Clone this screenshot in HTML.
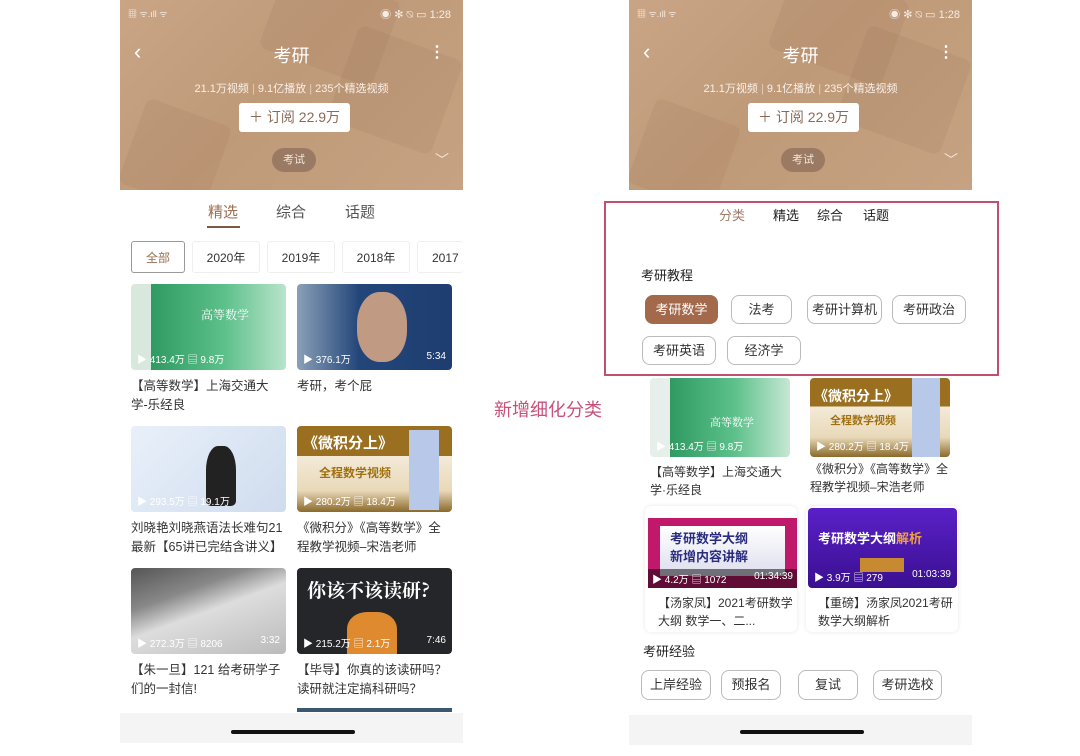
<!DOCTYPE html>
<html><head><meta charset="utf-8"><style>
*{margin:0;padding:0;box-sizing:border-box}
body{width:1080px;height:756px;background:#fff;position:relative;overflow:hidden;font-family:"Liberation Sans","Noto Sans CJK SC",sans-serif;color:#222}
.a{position:absolute}
.hdr{position:absolute;top:0;width:343px;height:190px;background:linear-gradient(135deg,#c9a586 0%,#bf9a78 45%,#c6a282 100%);overflow:hidden}
.sq{position:absolute;background:rgba(120,80,50,.08);transform:rotate(20deg);border-radius:8px}
.t{position:absolute;white-space:nowrap}
.sub{display:inline-block;background:#fff;border-radius:3px;color:#8a6a55;font-size:14px;padding:0 10px;height:29px;line-height:29px}
.tag{background:#9a7a62;color:#f3e8de;border-radius:14px;font-size:11px;width:44px;height:24px;line-height:24px;text-align:center}
.th{position:absolute;border-radius:4px;overflow:hidden}
.meta{position:absolute;left:6px;bottom:4px;right:6px;font-size:10px;color:#fff;white-space:nowrap}
.ttl{position:absolute;font-size:12px;line-height:18px;color:#333;width:155px}
.lt{font-size:12.5px;line-height:19px;width:152px}
.pill{position:absolute;border:1px solid #bbb;border-radius:8px;font-size:13px;text-align:center;color:#333;height:29px;line-height:27px;background:#fff}
.yr{position:absolute;top:241px;height:32px;line-height:32px;border:1px solid #eee;border-radius:3px;font-size:12px;color:#333;text-align:center}
.bar{position:absolute;height:30px;width:343px;background:#f4f4f4}
.hl{position:absolute;height:4px;width:124px;background:#111;border-radius:2px}
</style></head><body>

<!-- LEFT PHONE -->
<div class="hdr" style="left:120px">
<div class="sq" style="left:150px;top:-20px;width:120px;height:90px"></div>
<div class="sq" style="left:220px;top:40px;width:110px;height:100px"></div>
<div class="sq" style="left:10px;top:110px;width:90px;height:90px"></div>
<div class="t" style="left:8px;top:7px;font-size:9px;color:#f5ece4">▦ ᯤ.ıll ᯤ</div>
<div class="t" style="right:12px;top:6px;font-size:11px;color:#f5ece4">◉ ✻ ⍉ ▭ 1:28</div>
<div class="t" style="left:14px;top:40px;font-size:22px;color:#fff;line-height:24px">‹</div>
<div class="t" style="left:0;width:343px;text-align:center;top:42px;font-size:18px;color:#fff">考研</div>
<div class="t" style="right:18px;top:42px;font-size:16px;color:#fff;font-weight:bold">⋮</div>
<div class="t" style="left:0;width:343px;text-align:center;top:80px;font-size:11px;color:#f8efe8">21.1万视频 <span style="opacity:.6">|</span> 9.1亿播放 <span style="opacity:.6">|</span> 235个精选视频</div>
<div class="t" style="left:119px;top:103px"><span class="sub">＋ 订阅 22.9万</span></div>
<div class="t tag" style="left:152px;top:148px">考试</div>
<div class="t" style="right:14px;top:150px;font-size:14px;color:#f3e8de">﹀</div>
</div>
<div class="t" style="left:208px;top:201px;font-size:15px;color:#9a6e52">精选</div>
<div class="a" style="left:207px;top:226px;width:33px;height:2px;background:#7a5a45"></div>
<div class="t" style="left:276px;top:201px;font-size:15px;color:#555">综合</div>
<div class="t" style="left:345px;top:201px;font-size:15px;color:#555">话题</div>
<div class="yr" style="left:131px;width:54px;border-color:#999;color:#9a6e52">全部</div>
<div class="yr" style="left:192px;width:68px">2020年</div>
<div class="yr" style="left:267px;width:68px">2019年</div>
<div class="yr" style="left:342px;width:68px">2018年</div>
<div class="yr" style="left:417px;width:46px;border-right:none;text-align:left;padding-left:14px;overflow:hidden">2017年</div>

<div class="th" style="left:131px;top:284px;width:155px;height:86px;background:linear-gradient(90deg,#d9e8dd 0,#d9e8dd 20px,#2f9a62 20px,#5cc08a 60%,#b9e4cb)"><div class="t" style="left:70px;top:22px;font-size:12px;color:#fff;font-family:'Noto Serif CJK SC',serif">高等数学</div><div class="meta">▶ 413.4万 ▤ 9.8万</div></div>
<div class="th" style="left:297px;top:284px;width:155px;height:86px;background:linear-gradient(90deg,#8aa0b8,#23467a 40%,#1e3d70)"><div class="a" style="left:60px;top:8px;width:50px;height:70px;background:#c09a82;border-radius:45%"></div><div class="meta">▶ 376.1万<span style="float:right">5:34</span></div></div>
<div class="ttl lt" style="left:131px;top:377px">【高等数学】上海交通大学-乐经良</div>
<div class="ttl lt" style="left:297px;top:377px">考研，考个屁</div>

<div class="th" style="left:131px;top:426px;width:155px;height:86px;background:linear-gradient(135deg,#e9f0fa,#cfdcee)"><div class="a" style="left:75px;top:20px;width:30px;height:60px;background:#222;border-radius:40% 40% 5px 5px"></div><div class="meta">▶ 293.5万 ▤ 19.1万</div></div>
<div class="th" style="left:297px;top:426px;width:155px;height:86px;background:linear-gradient(180deg,#9a7020 0,#9a7020 35%,#f3ead8 35%,#e9d9b9 75%,#8b6a2a)"><div class="t" style="left:6px;top:6px;font-size:15px;color:#fff;font-weight:bold">《微积分上》</div><div class="t" style="left:22px;top:38px;font-size:12px;color:#a07010;font-weight:bold">全程数学视频</div><div class="a" style="left:112px;top:4px;width:30px;height:80px;background:#b8c8e8"></div><div class="meta">▶ 280.2万 ▤ 18.4万</div></div>
<div class="ttl lt" style="left:131px;top:519px">刘晓艳刘晓燕语法长难句21最新【65讲已完结含讲义】</div>
<div class="ttl lt" style="left:297px;top:519px">《微积分》《高等数学》全程教学视频–宋浩老师</div>

<div class="th" style="left:131px;top:568px;width:155px;height:86px;background:linear-gradient(160deg,#555 0,#888 30%,#ddd 50%,#bbb)"><div class="meta">▶ 272.3万 ▤ 8206<span style="float:right">3:32</span></div></div>
<div class="th" style="left:297px;top:568px;width:155px;height:86px;background:#25262a"><div class="t" style="left:10px;top:8px;font-size:19px;color:#fff;font-weight:bold;font-family:'Noto Serif CJK SC',serif">你该不该读研?</div><div class="a" style="left:50px;top:44px;width:50px;height:42px;background:#e08a30;border-radius:40% 40% 0 0"></div><div class="meta">▶ 215.2万 ▤ 2.1万<span style="float:right">7:46</span></div></div>
<div class="ttl lt" style="left:131px;top:661px">【朱一旦】121 给考研学子们的一封信!</div>
<div class="ttl lt" style="left:297px;top:661px">【毕导】你真的该读研吗？读研就注定搞科研吗？</div>
<div class="a" style="left:297px;top:708px;width:155px;height:4px;background:#3a5870"></div>
<div class="bar" style="left:120px;top:713px"></div>
<div class="hl" style="left:231px;top:730px"></div>

<!-- MIDDLE LABEL -->
<div class="t" style="left:494px;top:396px;font-size:18px;color:#c8507a">新增细化分类</div>

<!-- RIGHT PHONE -->
<div class="hdr" style="left:629px">
<div class="sq" style="left:150px;top:-20px;width:120px;height:90px"></div>
<div class="sq" style="left:220px;top:40px;width:110px;height:100px"></div>
<div class="sq" style="left:10px;top:110px;width:90px;height:90px"></div>
<div class="t" style="left:8px;top:7px;font-size:9px;color:#f5ece4">▦ ᯤ.ıll ᯤ</div>
<div class="t" style="right:12px;top:6px;font-size:11px;color:#f5ece4">◉ ✻ ⍉ ▭ 1:28</div>
<div class="t" style="left:14px;top:40px;font-size:22px;color:#fff;line-height:24px">‹</div>
<div class="t" style="left:0;width:343px;text-align:center;top:42px;font-size:18px;color:#fff">考研</div>
<div class="t" style="right:18px;top:42px;font-size:16px;color:#fff;font-weight:bold">⋮</div>
<div class="t" style="left:0;width:343px;text-align:center;top:80px;font-size:11px;color:#f8efe8">21.1万视频 <span style="opacity:.6">|</span> 9.1亿播放 <span style="opacity:.6">|</span> 235个精选视频</div>
<div class="t" style="left:119px;top:103px"><span class="sub">＋ 订阅 22.9万</span></div>
<div class="t tag" style="left:152px;top:148px">考试</div>
<div class="t" style="right:14px;top:150px;font-size:14px;color:#f3e8de">﹀</div>
</div>

<div class="a" style="left:604px;top:201px;width:395px;height:175px;border:2px solid #c0506e"></div>
<div class="t" style="left:719px;top:205px;font-size:13px;color:#a07a68">分类</div>
<div class="t" style="left:773px;top:205px;font-size:13px;color:#222">精选</div>
<div class="t" style="left:817px;top:205px;font-size:13px;color:#222">综合</div>
<div class="t" style="left:863px;top:205px;font-size:13px;color:#222">话题</div>
<div class="t" style="left:641px;top:265px;font-size:13px;color:#222">考研教程</div>
<div class="pill" style="left:645px;top:295px;width:73px;background:#a4694a;border-color:#a4694a;color:#fff">考研数学</div>
<div class="pill" style="left:731px;top:295px;width:61px">法考</div>
<div class="pill" style="left:807px;top:295px;width:75px">考研计算机</div>
<div class="pill" style="left:892px;top:295px;width:74px">考研政治</div>
<div class="pill" style="left:642px;top:336px;width:74px">考研英语</div>
<div class="pill" style="left:727px;top:336px;width:74px">经济学</div>

<div class="th" style="left:650px;top:378px;width:140px;height:79px;background:linear-gradient(90deg,#e6efe9 0,#e6efe9 20px,#2f9a62 20px,#5cc08a 60%,#c6e8d4)"><div class="t" style="left:60px;top:36px;font-size:11px;color:#fff;font-family:'Noto Serif CJK SC',serif">高等数学</div><div class="meta">▶ 413.4万 ▤ 9.8万</div></div>
<div class="th" style="left:810px;top:378px;width:140px;height:79px;background:linear-gradient(180deg,#9a7020 0,#9a7020 36%,#f3ead8 36%,#e9d9b9 75%,#8b6a2a)"><div class="t" style="left:4px;top:8px;font-size:14px;color:#fff;font-weight:bold">《微积分上》</div><div class="t" style="left:20px;top:34px;font-size:11px;color:#a07010;font-weight:bold">全程数学视频</div><div class="a" style="left:102px;top:0;width:28px;height:79px;background:#b8c8e8"></div><div class="meta">▶ 280.2万 ▤ 18.4万</div></div>
<div class="ttl" style="left:650px;top:463px;width:142px">【高等数学】上海交通大学·乐经良</div>
<div class="ttl" style="left:810px;top:460px;width:142px">《微积分》《高等数学》全程教学视频–宋浩老师</div>

<div class="a" style="left:645px;top:506px;width:152px;height:126px;background:#fff;border-radius:6px;box-shadow:0 0 4px rgba(0,0,0,.1)"></div>
<div class="a" style="left:806px;top:506px;width:152px;height:126px;background:#fff;border-radius:6px;box-shadow:0 0 4px rgba(0,0,0,.1)"></div>
<div class="th" style="left:648px;top:518px;width:149px;height:70px;background:#c0186a;border-radius:0"><div class="a" style="left:12px;top:8px;width:125px;height:50px;background:linear-gradient(#fff,#dde)"></div><div class="t" style="left:22px;top:10px;font-size:13px;font-weight:bold;color:#2a2c80">考研数学大纲</div><div class="t" style="left:22px;top:28px;font-size:13px;font-weight:bold;color:#2a2c80">新增内容讲解</div><div class="meta" style="background:rgba(0,0,0,.5);left:0;right:0;bottom:0;padding:2px 4px">▶ 4.2万 ▤ 1072<span style="float:right">01:34:39</span></div></div>
<div class="th" style="left:808px;top:508px;width:149px;height:80px;background:linear-gradient(#5a20c8,#3a1090)"><div class="t" style="left:10px;top:20px;font-size:13px;font-weight:bold;color:#fff">考研数学大纲<span style="color:#f0a040">解析</span></div><div class="a" style="left:52px;top:50px;width:44px;height:14px;background:#c88a30"></div><div class="meta">▶ 3.9万 ▤ 279<span style="float:right">01:03:39</span></div></div>
<div class="ttl" style="left:658px;top:594px;width:135px">【汤家凤】2021考研数学大纲 数学一、二...</div>
<div class="ttl" style="left:818px;top:594px;width:135px">【重磅】汤家凤2021考研数学大纲解析</div>

<div class="t" style="left:643px;top:641px;font-size:13px;color:#222">考研经验</div>
<div class="pill" style="left:641px;top:670px;width:70px;height:30px">上岸经验</div>
<div class="pill" style="left:721px;top:670px;width:60px;height:30px">预报名</div>
<div class="pill" style="left:798px;top:670px;width:60px;height:30px">复试</div>
<div class="pill" style="left:873px;top:670px;width:69px;height:30px">考研选校</div>
<div class="bar" style="left:629px;top:715px"></div>
<div class="hl" style="left:740px;top:730px"></div>
</body></html>
